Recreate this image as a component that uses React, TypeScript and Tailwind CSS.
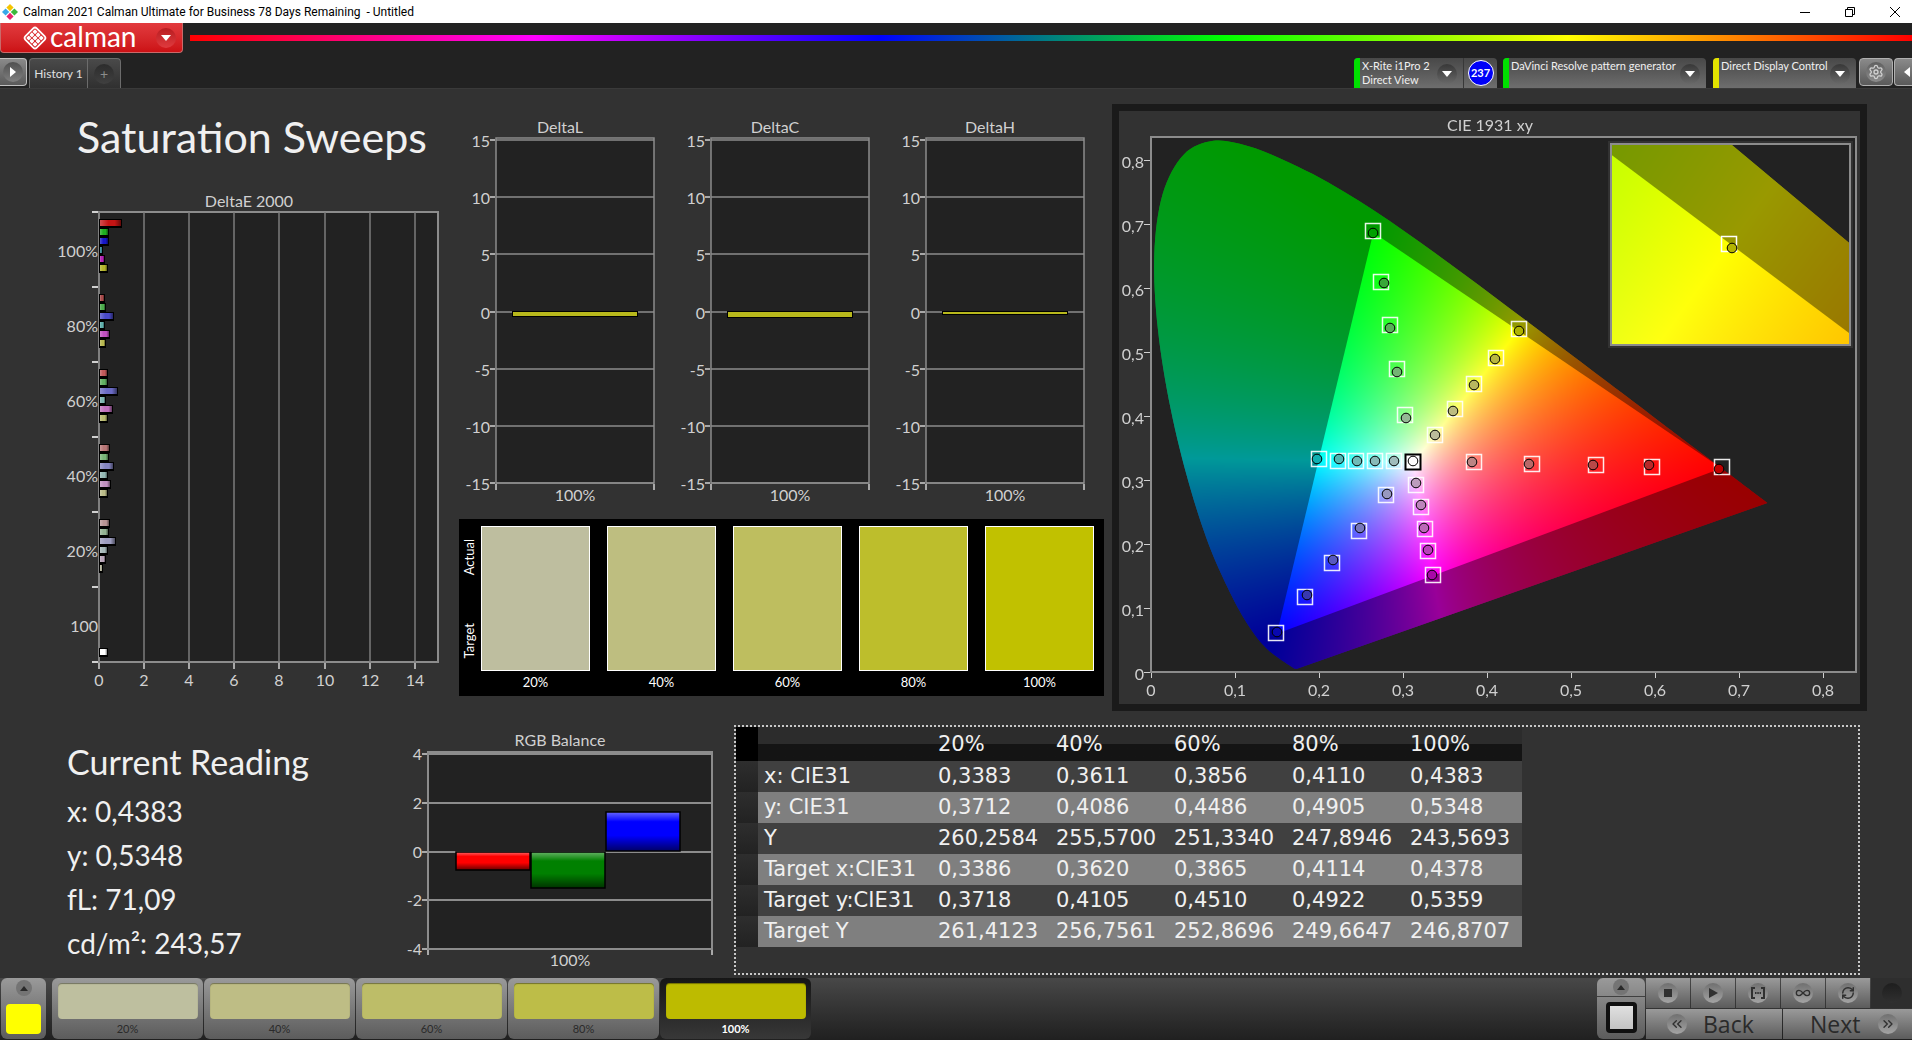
import { useEffect, useRef } from "react";
import type { ReactNode } from "react";
import { ChevronsLeft, ChevronsRight, Infinity as InfinityIcon, RefreshCw, Settings } from "lucide-react";

// ─── Sweep data ─────────────────────────────────────────────────────────────
const LEVELS = ["20%", "40%", "60%", "80%", "100%"];

const SWATCHES = [
  { label: "20%", panel: "bg-[#bebe9f]", strip: "bg-[#bebf9f]" },
  { label: "40%", panel: "bg-[#bebe80]", strip: "bg-[#bebd85]" },
  { label: "60%", panel: "bg-[#bebe5f]", strip: "bg-[#bdbd68]" },
  { label: "80%", panel: "bg-[#bdbe2c]", strip: "bg-[#bdbd48]" },
  { label: "100%", panel: "bg-[#c1c100]", strip: "bg-[#bdbb00]" },
];

const READINGS = [
  { label: "x: CIE31", values: ["0,3383", "0,3611", "0,3856", "0,4110", "0,4383"] },
  { label: "y: CIE31", values: ["0,3712", "0,4086", "0,4486", "0,4905", "0,5348"] },
  { label: "Y", values: ["260,2584", "255,5700", "251,3340", "247,8946", "243,5693"] },
  { label: "Target x:CIE31", values: ["0,3386", "0,3620", "0,3865", "0,4114", "0,4378"] },
  { label: "Target y:CIE31", values: ["0,3718", "0,4105", "0,4510", "0,4922", "0,5359"] },
  { label: "Target Y", values: ["261,4123", "256,7561", "252,8696", "249,6647", "246,8707"] },
];

// Bar lengths are in chart pixels
const DELTA_E = [
  { label: "100%", bars: [[22, "#c41414"], [9, "#1fae1f"], [9, "#1717c8"], [3, "#3a8f9a"], [5, "#b321b3"], [8, "#b5b52a"]] },
  { label: "80%", bars: [[5, "#a84a4a"], [6, "#4bab4b"], [14, "#4a4ac8"], [5, "#5fb0ac"], [10, "#c050c0"], [6, "#b8b850"]] },
  { label: "60%", bars: [[8, "#c25a5a"], [8, "#62b062"], [18, "#6a6ac4"], [6, "#7db5b0"], [13, "#c070bc"], [8, "#babb70"]] },
  { label: "40%", bars: [[10, "#b87676"], [9, "#78b478"], [14, "#8484c0"], [8, "#94b8b4"], [11, "#c090c0"], [8, "#babb88"]] },
  { label: "20%", bars: [[10, "#b89494"], [9, "#94b394"], [16, "#9c9cbe"], [8, "#a6b8b8"], [6, "#b8a4b8"], [3, "#b8b8a0"]] },
  { label: "100", bars: [[0, ""], [0, ""], [0, ""], [0, ""], [0, ""], [0, ""], [8, "#ffffff"]] },
] as { label: string; bars: [number, string][] }[];

// ─── Chromaticity maths ─────────────────────────────────────────────────────
const LOCUS = [
  [0.1741, 0.005], [0.1714, 0.0051], [0.1689, 0.0069], [0.1644, 0.0109], [0.1566, 0.0177], [0.144, 0.0297],
  [0.1355, 0.0399], [0.1241, 0.0578], [0.1096, 0.0868], [0.0913, 0.1327], [0.0687, 0.2007], [0.0454, 0.295],
  [0.0235, 0.4127], [0.0082, 0.5384], [0.0039, 0.6548], [0.0139, 0.7502], [0.0389, 0.812], [0.0743, 0.8338],
  [0.1142, 0.8262], [0.1547, 0.8059], [0.1929, 0.7816], [0.2296, 0.7543], [0.2658, 0.7243], [0.3016, 0.6923],
  [0.3373, 0.6589], [0.3731, 0.6245], [0.4087, 0.5896], [0.4441, 0.5547], [0.4788, 0.5202], [0.5125, 0.4866],
  [0.5448, 0.4544], [0.5752, 0.4242], [0.6029, 0.3965], [0.627, 0.3725], [0.6658, 0.334], [0.6915, 0.3083],
  [0.719, 0.2809], [0.7347, 0.2653],
];
const PRIMARIES = [[0.68, 0.32], [0.265, 0.69], [0.15, 0.06]];

interface View {
  left: number;
  top: number;
  right: number;
  bottom: number;
  // chromaticity -> pixel: px = ox + sx * x, py = oy - sy * y
  ox: number;
  oy: number;
  sx: number;
  sy: number;
}

const MAIN: View = { left: 32, top: 26, right: 737, bottom: 561, ox: 32, oy: 561, sx: 839, sy: 637 };
const INSET: View = {
  left: 493, top: 34, right: 730, bottom: 233,
  ox: 611 - 0.4378 * 4780, oy: 133 + 0.5359 * 4020, sx: 4780, sy: 4020,
};

function xyToRgb(x: number, y: number): [number, number, number] {
  const X = x / y;
  const Z = (1 - x - y) / y;
  const r = Math.max(0, 2.4935 * X - 0.9314 - 0.4027 * Z);
  const g = Math.max(0, -0.8295 * X + 1.7627 + 0.0236 * Z);
  const b = Math.max(0, 0.0358 * X - 0.0762 + 0.9569 * Z);
  const k = 255 / Math.max(r, g, b);
  return [r * k, g * k, b * k];
}

// Closed outline; a Catmull-Rom spline through the points when smooth is set
function tracePolygon(ctx: CanvasRenderingContext2D, pts: number[][], v: View, smooth: boolean) {
  const p = pts.map(([x, y]) => [v.ox + v.sx * x, v.oy - v.sy * y]);
  const last = p.length - 1;
  ctx.beginPath();
  ctx.moveTo(p[0][0], p[0][1]);
  for (let i = 0; i < last; i++) {
    const a = p[Math.max(0, i - 1)];
    const b = p[i];
    const c = p[i + 1];
    const d = p[Math.min(last, i + 2)];
    if (smooth) {
      ctx.bezierCurveTo(
        b[0] + (c[0] - a[0]) / 6, b[1] + (c[1] - a[1]) / 6,
        c[0] - (d[0] - b[0]) / 6, c[1] - (d[1] - b[1]) / 6,
        c[0], c[1]
      );
    } else ctx.lineTo(c[0], c[1]);
  }
  ctx.closePath();
}

function paintGamut(ctx: CanvasRenderingContext2D, v: View) {
  const w = v.right - v.left;
  const h = v.bottom - v.top;
  const layer = document.createElement("canvas");
  layer.width = w;
  layer.height = h;
  const layerCtx = layer.getContext("2d");
  if (!layerCtx) return;
  const img = layerCtx.createImageData(w, h);
  for (let j = 0; j < h; j++) {
    for (let i = 0; i < w; i++) {
      const x = (v.left + i + 0.5 - v.ox) / v.sx;
      const y = Math.max(0.001, (v.oy - v.top - j - 0.5) / v.sy);
      const [r, g, b] = xyToRgb(x, y);
      img.data.set([r, g, b, 255], (j * w + i) * 4);
    }
  }
  layerCtx.putImageData(img, 0, 0);

  ctx.fillStyle = "#222222";
  ctx.fillRect(v.left, v.top, w, h);
  ctx.save();
  ctx.beginPath();
  ctx.rect(v.left, v.top, w, h);
  ctx.clip();
  // Outside of the display gamut the colours are dimmed to 60 %
  ctx.save();
  tracePolygon(ctx, LOCUS, v, true);
  ctx.clip();
  ctx.drawImage(layer, v.left, v.top);
  ctx.fillStyle = "rgba(0,0,0,0.4)";
  ctx.fillRect(v.left, v.top, w, h);
  ctx.restore();
  tracePolygon(ctx, PRIMARIES, v, false);
  ctx.clip();
  ctx.drawImage(layer, v.left, v.top);
  ctx.restore();
}

// [target x, target y, measured x, measured y, fill]
const MARKERS: [number, number, number, number, string][] = [
  [254, 120, 254, 122, "#00a000"], [262, 171, 265, 172, "#38a838"], [271, 214, 271, 217, "#58b058"],
  [278, 258, 278, 261, "#74b474"], [286, 304, 287, 307, "#94b894"],
  [316, 324, 316, 324, "#bcbc9c"], [336, 298, 334, 300, "#bcbc80"], [355, 273, 355, 274, "#b8b860"],
  [377, 247, 376, 248, "#b8b840"], [400, 218, 400, 220, "#b0b400"],
  [200, 348, 198, 348, "#10b0b0"], [219, 350, 220, 348, "#50b8b4"], [237, 350, 238, 350, "#70bab8"],
  [256, 350, 256, 350, "#88bab8"], [275, 350, 275, 350, "#a0bcbc"],
  [297, 374, 297, 372, "#bc9cbc"], [302, 396, 302, 394, "#bc84bc"], [306, 418, 305, 417, "#bc68b8"],
  [309, 440, 309, 439, "#b840b8"], [314, 464, 313, 464, "#a808a8"],
  [267, 384, 268, 383, "#9898c0"], [240, 420, 241, 417, "#7878bc"], [213, 452, 214, 449, "#5858c0"],
  [186, 486, 188, 484, "#3838b0"], [157, 522, 158, 521, "#0808b0"],
  [355, 351, 353, 351, "#bc8484"], [413, 353, 410, 353, "#b86868"], [477, 354, 474, 354, "#b84848"],
  [533, 356, 530, 354, "#b82828"], [603, 356, 600, 358, "#c00000"],
];

// ─── Charts ─────────────────────────────────────────────────────────────────
const AXIS_TEXT = "fill-[#d0d0d0] font-[Lato,sans-serif] text-[16px]";

function CieChart() {
  const ref = useRef<HTMLCanvasElement>(null);

  useEffect(() => {
    const ctx = ref.current?.getContext("2d");
    if (!ctx) return;
    ctx.fillStyle = "#323232";
    ctx.fillRect(0, 0, 741, 593);
    paintGamut(ctx, MAIN);
    ctx.fillStyle = "#323232";
    ctx.fillRect(489, 30, 245, 207);
    paintGamut(ctx, INSET);
  }, []);

  return (
    <div className="relative border-[7px] border-[#1a1a1a]">
      <canvas ref={ref} width={741} height={593} className="block w-full" />
      <svg viewBox="0 0 741 593" className="absolute inset-0 w-full" role="img" aria-label="CIE 1931 xy">
        <text x="371" y="20" textAnchor="middle" className={AXIS_TEXT}>CIE 1931 xy</text>
        <rect x="32" y="26" width="705" height="535" fill="none" stroke="#8c8c8c" strokeWidth="2" />
        <rect x="492" y="33" width="239" height="201" fill="none" stroke="#8c8c8c" strokeWidth="2" />
        {[0, 1, 2, 3, 4, 5, 6, 7, 8].map((n) => {
          const label = n === 0 ? "0" : `0,${n}`;
          return (
            <g key={n} shapeRendering="crispEdges">
              <path d={`M${32 + n * 84} 562v5M25 ${561 - n * 64}h6`} stroke="#d0d0d0" strokeWidth="1" />
              <text x={32 + n * 84} y="585" textAnchor="middle" className={AXIS_TEXT}>{label}</text>
              <text x="25" y={569 - n * 64} textAnchor="end" className={AXIS_TEXT}>{label}</text>
            </g>
          );
        })}
        {MARKERS.map(([tx, ty, mx, my, fill]) => (
          <g key={`${tx}-${ty}`}>
            <rect x={tx - 7.5} y={ty - 7.5} width="15" height="15" fill="none" stroke="#ffffff" strokeOpacity="0.9" strokeWidth="1.5" />
            <circle cx={mx} cy={my} r="4.8" fill={fill} stroke="#000000" strokeWidth="1" />
          </g>
        ))}
        <rect x="286.5" y="343.5" width="15" height="15" fill="#ffffff" stroke="#000000" strokeWidth="2" />
        <circle cx="294" cy="350" r="4.8" fill="#ffffff" stroke="#000000" strokeWidth="1" />
        <rect x="602.5" y="125.5" width="15" height="15" fill="none" stroke="#ffffff" strokeWidth="1.5" />
        <circle cx="613" cy="137" r="4.8" fill="#b4b400" stroke="#000000" strokeWidth="1" />
      </svg>
    </div>
  );
}

function DeltaEChart() {
  return (
    <svg viewBox="0 0 455 514" className="w-full" role="img" aria-label="DeltaE 2000">
      <defs>
        <linearGradient id="barShade">
          <stop offset="0" stopColor="#fff" stopOpacity="0.25" />
          <stop offset="0.4" stopColor="#fff" stopOpacity="0" />
          <stop offset="0.7" stopColor="#000" stopOpacity="0" />
          <stop offset="1" stopColor="#000" stopOpacity="0.5" />
        </linearGradient>
      </defs>
      <text x="249" y="21" textAnchor="middle" className={AXIS_TEXT}>DeltaE 2000</text>
      <rect x="99" y="26" width="339" height="450" fill="#222222" stroke="#8c8c8c" strokeWidth="2" />
      {[0, 2, 4, 6, 8, 10, 12, 14].map((n) => {
        const x = Math.round(99 + n * 22.55);
        return (
          <g key={n}>
            <path d={`M${x} 26V476`} stroke="#7c7c7c" strokeWidth="1.5" />
            <path d={`M${x} 477v6`} stroke="#d0d0d0" strokeWidth="1.5" />
            <text x={x} y="500" textAnchor="middle" className={AXIS_TEXT}>{n}</text>
          </g>
        );
      })}
      {DELTA_E.map((group, g) => (
        <g key={group.label}>
          <path d={`M92 ${26 + g * 75}h6`} stroke="#d0d0d0" strokeWidth="2" />
          <text x="98" y={71 + g * 75} textAnchor="end" className={AXIS_TEXT}>{group.label}</text>
          {group.bars.map(([len, fill], i) =>
            len > 0 ? (
              <g key={i}>
                <rect x="99" y={33 + g * 75 + i * 9} width={len + 1} height="9" fill="#000" />
                <rect x="100" y={34 + g * 75 + i * 9} width={len - 1} height="6" fill={fill} />
                <rect x="100" y={34 + g * 75 + i * 9} width={len - 1} height="6" fill="url(#barShade)" />
              </g>
            ) : null
          )}
        </g>
      ))}
      <path d="M92 476h6" stroke="#d0d0d0" strokeWidth="2" />
    </svg>
  );
}

function DeltaChart({ title, depth }: { title: string; depth: number }) {
  return (
    <svg viewBox="0 0 215 401" className="min-w-0 flex-1" role="img" aria-label={title}>
      <text x="101" y="23" textAnchor="middle" className={AXIS_TEXT}>{title}</text>
      <rect x="37" y="28" width="158" height="345" fill="#222222" stroke="#8c8c8c" strokeWidth="1.5" />
      {[15, 10, 5, 0, -5, -10, -15].map((n) => {
        const y = Math.round(201.5 - n * 11.45);
        return (
          <g key={n}>
            <path d={`M37 ${y}H195`} stroke="#8c8c8c" strokeWidth="1.5" />
            <path d={`M31 ${y}h5`} stroke="#d0d0d0" strokeWidth="1.5" />
            <text x="31" y={y + 7} textAnchor="end" className={AXIS_TEXT}>{n}</text>
          </g>
        );
      })}
      <path d="M37 374v6M195 374v6" stroke="#d0d0d0" strokeWidth="1.5" />
      <rect x="53" y="201" width="126" height={depth} fill="#000" />
      <rect x="54" y="202" width="124" height={depth - 2} fill="#b8b81c" />
      <text x="116" y="391" textAnchor="middle" className={AXIS_TEXT}>100%</text>
    </svg>
  );
}

function RgbBalanceChart() {
  const bars = [
    { x: 56, y: 133, h: 18, fill: "#ff0000" },
    { x: 131, y: 133, h: 36, fill: "#008000" },
    { x: 206, y: 93, h: 39, fill: "#0000ff" },
  ];
  return (
    <svg viewBox="0 6 334 250" className="w-full" role="img" aria-label="RGB Balance">
      <defs>
        <linearGradient id="gloss" x2="0" y2="1">
          <stop offset="0" stopColor="#fff" stopOpacity="0.4" />
          <stop offset="0.25" stopColor="#fff" stopOpacity="0" />
          <stop offset="0.6" stopColor="#000" stopOpacity="0" />
          <stop offset="1" stopColor="#000" stopOpacity="0.6" />
        </linearGradient>
      </defs>
      <text x="160" y="27" textAnchor="middle" className={AXIS_TEXT}>RGB Balance</text>
      <rect x="28" y="33" width="284" height="197" fill="#222222" stroke="#8c8c8c" strokeWidth="2" />
      {[4, 2, 0, -2, -4].map((n) => {
        const y = Math.round(132.5 - n * 24.4);
        return (
          <g key={n}>
            <path d={`M28 ${y}H312`} stroke="#8c8c8c" strokeWidth="2" />
            <path d={`M22 ${y}h5`} stroke="#d0d0d0" strokeWidth="1.5" />
            <text x="22" y={y + 6} textAnchor="end" className={AXIS_TEXT}>{n}</text>
          </g>
        );
      })}
      <path d="M28 231v5M312 231v5" stroke="#d0d0d0" strokeWidth="1.5" />
      {bars.map((b) => (
        <g key={b.fill}>
          <rect x={b.x} y={b.y} width="74" height={b.h} fill={b.fill} />
          <rect x={b.x} y={b.y} width="74" height={b.h} fill="url(#gloss)" stroke="#000" strokeWidth="1.5" />
        </g>
      ))}
      <text x="170" y="247" textAnchor="middle" className={AXIS_TEXT}>100%</text>
    </svg>
  );
}

// ─── Chrome ─────────────────────────────────────────────────────────────────
function AppIcon() {
  return (
    <svg viewBox="0 0 16 16" className="size-4">
      <path d="M8 0l3.600 3.600L8 7.200 4.400 3.600z" fill="#f5c400" />
      <path d="M12.400 4.400L16 8l-3.600 3.600L8.800 8z" fill="#3cb83c" />
      <path d="M8 8.800l3.600 3.600L8 16l-3.600-3.600z" fill="#e8236c" />
      <path d="M3.600 4.400L7.200 8l-3.600 3.600L0 8z" fill="#3aa8e8" />
    </svg>
  );
}

function CalmanMark() {
  return (
    <svg viewBox="0 0 24 24" className="size-6">
      <rect x="4" y="4" width="16" height="16" rx="2.500" transform="rotate(45 12 12)" fill="none" stroke="#fff" strokeWidth="1.800" />
      <g transform="rotate(45 12 12)" fill="#fff">
        {[5.8, 10.2, 14.6].map((x) => [5.8, 10.2, 14.6].map((y) => (
          <rect key={`${x}${y}`} x={x} y={y} width="3.600" height="3.600" rx="0.700" />
        )))}
      </g>
    </svg>
  );
}

// Round recessed knob that most of the toolbar buttons share
function Knob({ children, tone }: { children?: ReactNode; tone: string }) {
  return (
    <span className={`flex size-5 shrink-0 items-center justify-center rounded-full bg-linear-to-b ${tone}`}>
      {children}
    </span>
  );
}

function DownArrow() {
  return (
    <svg viewBox="0 0 10 6" className="h-[6px] w-[10px]">
      <path d="M0 0h10L5 6z" fill="#fff" />
    </svg>
  );
}

function DeviceTab({ bar, lines, width, children }: { bar: string; lines: string[]; width: string; children?: ReactNode }) {
  return (
    <div className={`flex h-[30px] overflow-hidden rounded-t-sm bg-linear-to-b from-[#484848] to-[#6e6e6e] ${width}`}>
      <span className={`w-[6px] shrink-0 ${bar}`} />
      <button type="button" className="flex min-w-0 flex-1 justify-between pr-[6px] pl-[2px] text-left text-[11px] leading-[14px] whitespace-nowrap text-[#f0f0f0]">
        <span className="pt-px">
          {lines.map((line) => <span key={line} className="block">{line}</span>)}
        </span>
        <span className="self-end pb-1">
          <Knob tone="from-[#383838] to-[#686868]"><DownArrow /></Knob>
        </span>
      </button>
      {children}
    </div>
  );
}

function Header() {
  return (
    <header className="bg-[#222222]">
      <div className="flex h-[23px] items-center justify-between bg-white pr-3 pl-[2px] text-black">
        <div className="flex items-center gap-[5px] font-[Roboto,sans-serif] text-[12px] whitespace-pre">
          <AppIcon />
          {"Calman 2021 Calman Ultimate for Business 78 Days Remaining  - Untitled"}
        </div>
        <div className="flex items-center gap-[35px]">
          <button type="button" aria-label="Minimize">
            <svg viewBox="0 0 10 10" className="size-[10px]"><path d="M0 5.500h10" stroke="#000" /></svg>
          </button>
          <button type="button" aria-label="Restore">
            <svg viewBox="0 0 10 10" className="size-[10px]" fill="none" stroke="#000">
              <path d="M.5 2.500h7v7h-7zM2.500 2.500v-2h7v7h-2" />
            </svg>
          </button>
          <button type="button" aria-label="Close">
            <svg viewBox="0 0 10 10" className="size-[10px]"><path d="M0 0l10 10M10 0L0 10" stroke="#000" /></svg>
          </button>
        </div>
      </div>

      <div className="flex h-[30px] items-start">
        <button
          type="button"
          className="flex h-[30px] w-[183px] shrink-0 items-center rounded-b-sm border border-t-0 border-[#c96a6a] bg-linear-to-b from-[#e23a3e] to-[#cc1014] pl-[22px] text-white"
        >
          <CalmanMark />
          <span className="ml-[3px] -mt-[4px] font-[Lato,sans-serif] text-[28px] leading-[28px]">calman</span>
          <span className="mr-[6px] ml-auto"><Knob tone="from-[#b81c20] to-[#e03a3e]"><DownArrow /></Knob></span>
        </button>
        <div className="mt-3 ml-[7px] h-[6px] flex-1 bg-[linear-gradient(90deg,#f00,#f0f_20%,#00f_40%,#0f0_60%,#ff0_80%,#f00)]" />
      </div>

      <div className="mt-[5px] flex h-[30px] justify-between">
        <div className="flex">
          <button type="button" aria-label="Expand history" className="flex h-7 w-[27px] items-center rounded-r-sm border border-l-0 border-[#c0c0c0] bg-linear-to-b from-[#8a8a8a] to-[#5a5a5a] pl-[3px]">
            <Knob tone="from-[#505050] to-[#808080]">
              <svg viewBox="0 0 6 10" className="h-[10px] w-[6px]"><path d="M0 0v10l6-5z" fill="#fff" /></svg>
            </Knob>
          </button>
          <div className="ml-[2px] flex rounded-t-sm border border-b-0 border-[#6c6c6c] bg-linear-to-b from-[#4a4a4a] to-[#303030]">
            <button type="button" className="w-[57px] text-[12px] text-[#e0e0e0]">History 1</button>
            <button type="button" aria-label="Add history" className="flex w-[33px] items-center justify-center border-l border-[#6c6c6c] text-[14px] leading-none text-[#8c8c8c]">
              <Knob tone="from-[#2c2c2c] to-[#404040]">+</Knob>
            </button>
          </div>
        </div>
        <div className="flex">
          <DeviceTab bar="bg-[#00e000]" lines={["X-Rite i1Pro 2", "Direct View"]} width="w-[143px]">
            <span className="flex w-[34px] items-center justify-center border-l border-[#383838]">
              <span className="flex size-[26px] items-center justify-center rounded-full border border-white bg-[#0000f8] text-[11px] font-bold text-white">237</span>
            </span>
          </DeviceTab>
          <div className="w-[6px]" />
          <DeviceTab bar="bg-[#00e000]" lines={["DaVinci Resolve pattern generator"]} width="w-[203px]" />
          <div className="w-[7px]" />
          <DeviceTab bar="bg-[#e4e400]" lines={["Direct Display Control"]} width="w-[143px]" />
          <button type="button" aria-label="Settings" className="ml-[3px] flex h-7 w-[34px] items-center justify-center rounded-sm border border-[#b0b0b0] bg-linear-to-b from-[#8a8a8a] to-[#5a5a5a]">
            <Knob tone="from-[#606060] to-[#8c8c8c]"><Settings size={16} color="#d0d0d0" /></Knob>
          </button>
          <button type="button" aria-label="Collapse" className="ml-px flex h-7 w-[18px] items-center justify-end rounded-l-sm border border-r-0 border-[#b0b0b0] bg-linear-to-b from-[#8a8a8a] to-[#5a5a5a] pr-[2px]">
            <svg viewBox="0 0 6 10" className="h-[10px] w-[6px]"><path d="M6 0v10L0 5z" fill="#fff" /></svg>
          </button>
        </div>
      </div>
    </header>
  );
}

function SwatchPanel() {
  return (
    <div className="flex bg-black pt-[7px] pr-[10px] pb-[3px] text-white">
      <div className="flex w-[22px] flex-col items-center justify-between pt-[13px] pb-[35px] text-[13px]">
        <span className="rotate-180 [writing-mode:vertical-rl]">Actual</span>
        <span className="rotate-180 [writing-mode:vertical-rl]">Target</span>
      </div>
      <div className="grid flex-1 grid-cols-5 gap-[17px]">
        {SWATCHES.map((s) => (
          <div key={s.label} className="text-center text-[13px] leading-[22px]">
            <div className={`h-[145px] border border-white ${s.panel}`} />
            {s.label}
          </div>
        ))}
      </div>
    </div>
  );
}

function ReadingsTable() {
  return (
    <div className="border-2 border-dotted border-[#c8c8c8] pb-6">
      <table className="border-collapse text-left font-['DejaVu_Sans',sans-serif] text-[21px] leading-[31px] text-[#f0f0f0]">
        <thead>
          <tr className="h-[34px] bg-linear-to-b from-[#2c2c2c] from-50% to-[#141414] to-50%">
            <td className="w-[22px] bg-black" />
            <td className="w-[174px]" />
            {LEVELS.map((l) => <th key={l} scope="col" className="w-[118px] pl-[6px] font-normal">{l}</th>)}
          </tr>
        </thead>
        <tbody>
          {READINGS.map((row) => (
            <tr key={row.label} className="bg-[#404040] even:bg-[#7f7f7f]">
              <td className="bg-linear-to-b from-[#2e2e2e] to-[#222222]" />
              <th scope="row" className="pl-[6px] font-normal whitespace-nowrap">{row.label}</th>
              {row.values.map((v) => <td key={v} className="pl-[6px]">{v}</td>)}
            </tr>
          ))}
        </tbody>
      </table>
    </div>
  );
}

// ─── Bottom bar ─────────────────────────────────────────────────────────────
const METAL = "bg-linear-to-b from-[#9a9a9a] to-[#5c5c5c]";
const KNOB_METAL = "from-[#707070] to-[#a4a4a4]";

function UpArrow() {
  return (
    <svg viewBox="0 0 8 5" className="h-[5px] w-2"><path d="M0 5h8L4 0z" fill="#2a2a2a" /></svg>
  );
}

function Footer() {
  const tools: { name: string; icon: ReactNode }[] = [
    { name: "Stop", icon: <span className="size-2 bg-[#303030]" /> },
    { name: "Play", icon: <svg viewBox="0 0 9 10" className="h-[10px] w-[9px]"><path d="M0 0v10l9-5z" fill="#303030" /></svg> },
    {
      name: "Measure series",
      icon: (
        <svg viewBox="0 0 14 12" className="h-3 w-[14px]" fill="none" stroke="#303030" strokeWidth="2">
          <path d="M4 1H1v10h3M10 1h3v10h-3" />
          <path d="M4 6h6" strokeDasharray="1.500 0.800" />
        </svg>
      ),
    },
    { name: "Continuous", icon: <InfinityIcon size={16} color="#303030" /> },
    { name: "Refresh", icon: <RefreshCw size={14} color="#303030" strokeWidth={2.5} /> },
  ];

  return (
    <footer className="flex h-[62px] justify-between overflow-hidden bg-linear-to-b from-[#484848] to-[#202020]">
      <div className="flex">
        <button type="button" aria-label="Current colour" className={`ml-px flex h-[61px] w-[45px] flex-col items-center justify-between rounded-md pb-[5px] ${METAL}`}>
          <span className="pt-[2px]"><span className="flex size-4 items-center justify-center rounded-full bg-[#747474]"><UpArrow /></span></span>
          <span className="h-[30px] w-[35px] rounded-sm bg-[#ffff00]" />
        </button>
        <div className="ml-[6px] flex gap-px">
          {SWATCHES.map((s, i) => {
            const active = i === SWATCHES.length - 1;
            return (
              <button
                key={s.label}
                type="button"
                aria-pressed={active}
                className={`flex h-[61px] w-[151px] flex-col items-center rounded-md pt-[5px] text-[11px] leading-[20px] ${
                  active ? "bg-linear-to-b from-[#161616] to-[#383838] font-bold text-white" : `text-[#2a2a2a] ${METAL}`
                }`}
              >
                <span className={`h-[36px] w-[140px] rounded-sm shadow-[inset_0_1px_1px_#0006] ${s.strip}`} />
                {s.label}
              </button>
            );
          })}
        </div>
      </div>

      <div className="flex">
        <button type="button" aria-label="Display pattern" className={`flex h-[61px] w-[48px] flex-col items-center rounded-md ${METAL}`}>
          <span className="flex h-[19px] w-full items-center justify-center border-b border-[#404040]">
            <span className="flex size-4 items-center justify-center rounded-full bg-[#747474]"><UpArrow /></span>
          </span>
          <span className="mt-[5px] h-[31px] w-[31px] rounded-sm border-4 border-[#101010] bg-linear-to-b from-[#e0e0e0] to-[#c4c4c4]" />
        </button>
        <div className="ml-px flex w-[266px] flex-col gap-px">
          <div className="flex h-[30px] gap-px">
            {tools.map((t) => (
              <button key={t.name} type="button" aria-label={t.name} className={`flex w-11 items-center justify-center ${METAL}`}>
                <Knob tone={KNOB_METAL}>{t.icon}</Knob>
              </button>
            ))}
            <span className="flex flex-1 items-center justify-center bg-[#2e2e2e]">
              <Knob tone="from-[#1e1e1e] to-[#303030]" />
            </span>
          </div>
          <div className="flex h-[30px] gap-px font-['Open_Sans',sans-serif] text-[23px] leading-[30px] text-[#2a2a2a]">
            <button type="button" className={`flex w-[136px] items-center gap-4 pl-[21px] ${METAL}`}>
              <Knob tone={KNOB_METAL}><ChevronsLeft size={16} color="#303030" /></Knob>
              Back
            </button>
            <button type="button" className={`flex flex-1 items-center gap-[18px] pl-[27px] ${METAL}`}>
              Next
              <Knob tone={KNOB_METAL}><ChevronsRight size={16} color="#303030" /></Knob>
            </button>
          </div>
        </div>
      </div>
    </footer>
  );
}

export default function App() {
  return (
    <div className="flex min-h-screen flex-col bg-[#323232] font-[Lato,sans-serif]">
      <Header />
      <main className="flex-1 border-t border-[#3a3a3a]">
        <div className="grid grid-cols-[455fr_657fr_755fr_45fr]">
          <section className="pt-[20px]">
            <h1 className="pl-[77px] text-[43px] leading-[56px] whitespace-nowrap text-[#f0f0f0]">Saturation Sweeps</h1>
            <div className="mt-[21px]"><DeltaEChart /></div>
          </section>
          <section className="pt-[21px] pr-2 pl-1">
            <div className="flex">
              <DeltaChart title="DeltaL" depth={6} />
              <DeltaChart title="DeltaC" depth={7} />
              <DeltaChart title="DeltaH" depth={4} />
            </div>
            <div className="mt-2"><SwatchPanel /></div>
          </section>
          <section className="pt-[15px]">
            <CieChart />
          </section>
        </div>
        <div className="mt-[14px] grid grid-cols-[400fr_334fr_1126fr_52fr]">
          <section className="pt-[15px] pl-[67px] text-[#f0f0f0]">
            <h2 className="mb-[5px] text-[34px] leading-[44px]">Current Reading</h2>
            {["x: 0,4383", "y: 0,5348", "fL: 71,09", "cd/m²: 243,57"].map((line) => (
              <p key={line} className="text-[28px] leading-[44px]">{line}</p>
            ))}
          </section>
          <RgbBalanceChart />
          <ReadingsTable />
        </div>
      </main>
      <Footer />
    </div>
  );
}
